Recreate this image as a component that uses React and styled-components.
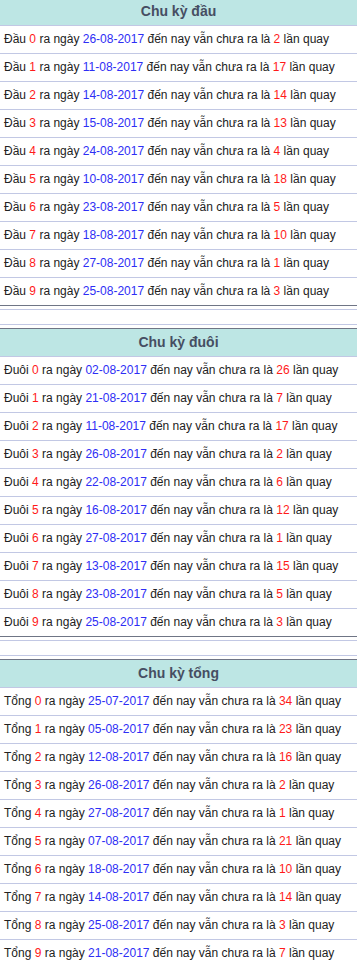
import styled, { createGlobalStyle } from 'styled-components';

const GlobalStyle = createGlobalStyle`
  body {
    margin: 0;
    background: #ffffff;
    font-family: "Liberation Sans", Arial, sans-serif;
  }
`

const sections = [
    {
        title: 'Chu kỳ đầu',
        label: 'Đầu',
        rows: [
            ['26-08-2017', 2], ['11-08-2017', 17], ['14-08-2017', 14], ['15-08-2017', 13], ['24-08-2017', 4],
            ['10-08-2017', 18], ['23-08-2017', 5], ['18-08-2017', 10], ['27-08-2017', 1], ['25-08-2017', 3],
        ],
    },
    {
        title: 'Chu kỳ đuôi',
        label: 'Đuôi',
        rows: [
            ['02-08-2017', 26], ['21-08-2017', 7], ['11-08-2017', 17], ['26-08-2017', 2], ['22-08-2017', 6],
            ['16-08-2017', 12], ['27-08-2017', 1], ['13-08-2017', 15], ['23-08-2017', 5], ['25-08-2017', 3],
        ],
    },
    {
        title: 'Chu kỳ tổng',
        label: 'Tổng',
        rows: [
            ['25-07-2017', 34], ['05-08-2017', 23], ['12-08-2017', 16], ['26-08-2017', 2], ['27-08-2017', 1],
            ['07-08-2017', 21], ['18-08-2017', 10], ['14-08-2017', 14], ['25-08-2017', 3], ['21-08-2017', 7],
        ],
    },
]

export default function App() {
    return (
        <>
            <GlobalStyle />
            <Page>
                {sections.map((section, i) => (
                    <div key={section.title}>
                        {i > 0 && <Spacer />}
                        <Section>
                            <Header>{section.title}</Header>
                            {section.rows.map(([date, count], n) => (
                                <Row key={n}>
                                    {section.label} <Num>{n}</Num> ra ngày <DateText>{date}</DateText> đến nay vẫn chưa ra là <Num>{count}</Num> lần quay
                                </Row>
                            ))}
                        </Section>
                    </div>
                ))}
            </Page>
        </>
    );
}

const Page = styled.div`
    width: 357px;
    margin-top: -3px;
`
const Section = styled.div`
    border-top: 1px solid #6f7585;
    border-bottom: 1px solid #6f7585;
`
const Header = styled.div`
    height: 27px;
    line-height: 27px;
    background: #bde6e4;
    color: #464e62;
    font-weight: bold;
    font-size: 14px;
    text-align: center;
    border-bottom: 1px solid #c2c8e4;
`
const Row = styled.div`
    height: 27px;
    line-height: 27px;
    padding-left: 4px;
    font-size: 12px;
    color: #222222;
    white-space: nowrap;
    border-bottom: 1px solid #c2c8e4;
    &:last-child {
        border-bottom: none;
    }
`
const Num = styled.span`
    color: #ff1a1a;
`
const DateText = styled.span`
    color: #2e2ef5;
`
const Spacer = styled.div`
    height: 14px;
    margin: 3px 0;
    border-top: 1px solid #c2c8e4;
    border-bottom: 1px solid #c2c8e4;
`
